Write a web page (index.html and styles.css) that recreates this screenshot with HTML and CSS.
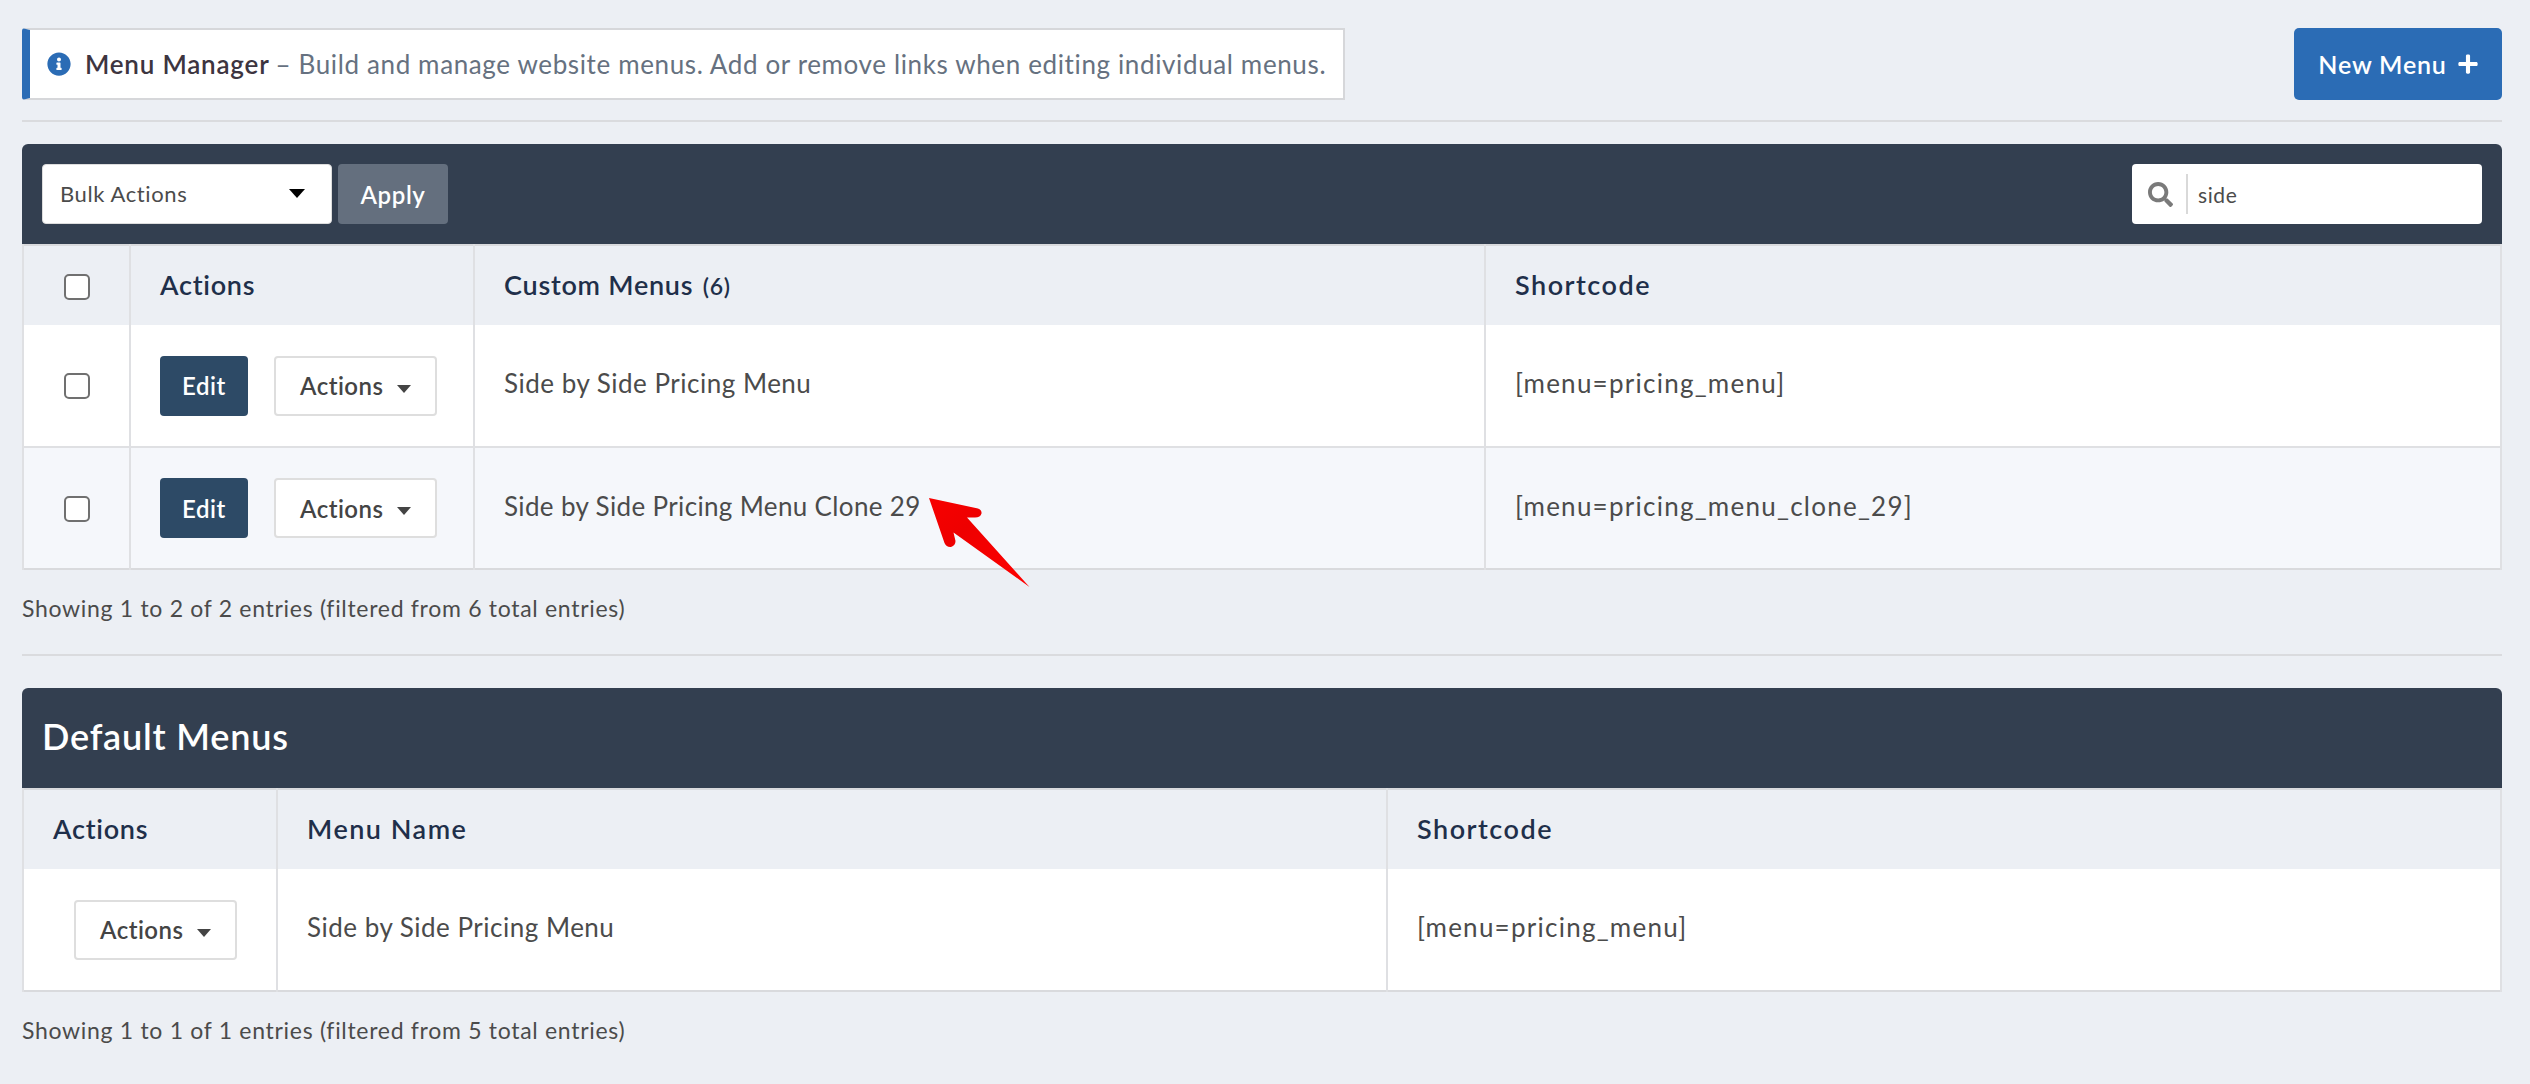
FILE: index.html
```html
<!DOCTYPE html>
<html lang="en">

<head>
    <meta charset="UTF-8">
    <title>Menu Manager</title>
    <link rel="stylesheet" href="styles.css">
</head>

<body>
    <div class="top-bar">
        <div class="notice">
            <svg class="info-icon" viewBox="0 0 512 512"><path d="M256 8C119.043 8 8 119.083 8 256c0 136.997 111.043 248 248 248s248-111.003 248-248C504 119.083 392.957 8 256 8zm0 110c23.196 0 42 18.804 42 42s-18.804 42-42 42-42-18.804-42-42 18.804-42 42-42zm56 254c0 6.627-5.373 12-12 12h-88c-6.627 0-12-5.373-12-12v-24c0-6.627 5.373-12 12-12h12v-64h-12c-6.627 0-12-5.373-12-12v-24c0-6.627 5.373-12 12-12h64c6.627 0 12 5.373 12 12v100h12c6.627 0 12 5.373 12 12v24z"/></svg>
            <strong>Menu Manager</strong>
            <span>– Build and manage website menus. Add or remove links when editing individual menus.</span>
        </div>
        <button class="btn-new">New Menu
            <svg class="plus-icon" viewBox="0 0 448 512"><path d="M416 208H272V64c0-17.67-14.33-32-32-32h-32c-17.67 0-32 14.33-32 32v144H32c-17.67 0-32 14.33-32 32v32c0 17.67 14.33 32 32 32h144v144c0 17.67 14.33 32 32 32h32c17.67 0 32-14.33 32-32V304h144c17.67 0 32-14.33 32-32v-32c0-17.67-14.33-32-32-32z"/></svg>
        </button>
    </div>
    <hr class="rule-top">

    <div class="panel-bar">
        <div class="bulk">
            <div class="bulk-select">Bulk Actions <i class="caret caret-black"></i></div>
            <button class="btn-apply">Apply</button>
        </div>
        <div class="search">
            <svg class="search-icon" viewBox="0 0 512 512"><path d="M505 442.7L405.3 343c-4.5-4.5-10.6-7-17-7H372c27.6-35.3 44-79.7 44-128C416 93.1 322.9 0 208 0S0 93.1 0 208s93.1 208 208 208c48.3 0 92.7-16.4 128-44v16.3c0 6.4 2.5 12.5 7 17l99.7 99.7c9.4 9.4 24.6 9.4 33.9 0l28.3-28.3c9.4-9.4 9.4-24.6.1-34zM208 336c-70.7 0-128-57.2-128-128 0-70.7 57.2-128 128-128 70.7 0 128 57.2 128 128 0 70.7-57.2 128-128 128z"/></svg>
            <span class="search-text">side</span>
        </div>
    </div>
    <table class="menu-table custom">
        <thead>
            <tr>
                <th class="check-cell"><span class="check"></span></th>
                <th>Actions</th>
                <th>Custom Menus <small>(6)</small></th>
                <th class="wide">Shortcode</th>
            </tr>
        </thead>
        <tbody>
            <tr>
                <td class="check-cell"><span class="check"></span></td>
                <td><button class="btn-edit">Edit</button><button class="btn-actions">Actions <i class="caret"></i></button></td>
                <td class="label">Side by Side Pricing Menu</td>
                <td class="label code">[menu=pricing_menu]</td>
            </tr>
            <tr class="alt">
                <td class="check-cell"><span class="check"></span></td>
                <td><button class="btn-edit">Edit</button><button class="btn-actions">Actions <i class="caret"></i></button></td>
                <td class="label clone">Side by Side Pricing Menu Clone 29</td>
                <td class="label code">[menu=pricing_menu_clone_29]</td>
            </tr>
        </tbody>
    </table>
    <p class="entries">Showing 1 to 2 of 2 entries (filtered from 6 total entries)</p>
    <hr class="rule-mid">

    <div class="panel-bar panel-title">Default Menus</div>
    <table class="menu-table defaults">
        <thead>
            <tr>
                <th>Actions</th>
                <th class="wide">Menu Name</th>
                <th class="wide">Shortcode</th>
            </tr>
        </thead>
        <tbody>
            <tr>
                <td class="center-cell"><button class="btn-actions">Actions <i class="caret"></i></button></td>
                <td class="label">Side by Side Pricing Menu</td>
                <td class="label code">[menu=pricing_menu]</td>
            </tr>
        </tbody>
    </table>
    <p class="entries">Showing 1 to 1 of 1 entries (filtered from 5 total entries)</p>

    <!-- annotation arrow drawn over the table -->
    <svg class="arrow" viewBox="0 0 110 98">
        <defs>
            <linearGradient id="arrowFill" x1="0" y1="0" x2="1" y2="1">
                <stop offset="0" stop-color="#f80000"/>
                <stop offset="0.35" stop-color="#ee0000"/>
                <stop offset="1" stop-color="#ff0000"/>
            </linearGradient>
        </defs>
        <path fill="url(#arrowFill)" d="M4 4 L53 14.5 Q57 16 56.500 19.500 Q55.500 23.500 50 23.500 L42 23.500 L104.500 93 L28.500 38.500 L30.500 47 Q30.500 51.500 26 53 Q21.500 53.500 19.500 49 Z"/>
    </svg>
</body>

</html>
```
FILE: styles.css
```css
body {
    font-family: "Lato", "Open Sans", sans-serif;
    font-size: 26px;
    color: #4b4b4b;
    background-color: #eceff4;
    margin: 0;
    padding: 28px 28px 0 22px;
    height: 1056px;
    overflow: hidden;
    position: relative;
}

.top-bar {
    display: flex;
    justify-content: space-between;
    align-items: stretch;
    height: 72px;
}

.notice {
    display: flex;
    align-items: center;
    gap: 6px;
    box-sizing: border-box;
    width: 1323px;
    padding-left: 17px;
    background-color: #fff;
    border: 2px solid #d6d7da;
    border-left: 8px solid #2b6cb5;
    border-radius: 3px 0 0 3px;
    letter-spacing: 0.63px;
    color: #667180;
}

.notice strong {
    font-weight: 600;
    color: #3d3540;
    margin-left: 8px;
    letter-spacing: 0.8px;
}

.info-icon {
    width: 24px;
    height: 24px;
    fill: #2b6cb5;
}

button {
    font-family: inherit;
    cursor: pointer;
}

.btn-new {
    width: 208px;
    display: flex;
    align-items: center;
    justify-content: center;
    gap: 11px;
    border: none;
    border-radius: 5px;
    background-color: #2b6cb5;
    color: #fff;
    font-size: 25px;
    font-weight: 600;
    letter-spacing: 0.8px;
}

.plus-icon {
    width: 20px;
    height: 22px;
    fill: #fff;
}

hr {
    border: none;
    height: 2px;
    background-color: #dadbde;
    margin: 0;
}

.rule-top {
    margin: 20px 0 22px;
}

.rule-mid {
    margin: 0 0 32px;
}

.panel-bar {
    display: flex;
    justify-content: space-between;
    align-items: center;
    box-sizing: border-box;
    height: 100px;
    padding: 0 20px;
    background-color: #333f50;
    border-radius: 6px 6px 0 0;
}

.panel-title {
    padding-bottom: 4px;
    color: #fff;
    font-size: 36px;
    font-weight: 600;
    letter-spacing: 0.8px;
}

.bulk {
    display: flex;
    gap: 6px;
}

.bulk-select {
    display: flex;
    justify-content: space-between;
    align-items: center;
    box-sizing: border-box;
    width: 290px;
    height: 60px;
    padding: 0 26px 2px 17px;
    background-color: #fff;
    border: 1px solid #ddd;
    border-radius: 4px;
    font-size: 22px;
    letter-spacing: 0.6px;
}

.btn-apply {
    width: 110px;
    height: 60px;
    border: none;
    border-radius: 4px;
    background-color: #646f7e;
    color: #fff;
    font-size: 24px;
    font-weight: 600;
    letter-spacing: 0.6px;
}

.search {
    display: flex;
    align-items: center;
    box-sizing: border-box;
    width: 350px;
    height: 60px;
    padding-left: 16px;
    background-color: #fff;
    border-radius: 4px;
}

.search-icon {
    width: 25px;
    height: 25px;
    fill: #7a7a7a;
}

.search-text {
    border-left: 2px solid #d9d9d9;
    margin-left: 13px;
    padding-left: 10px;
    height: 40px;
    line-height: 41px;
    font-size: 21px;
    letter-spacing: 0.6px;
}

.menu-table {
    width: 100%;
    table-layout: fixed;
    border-collapse: collapse;
    border: 2px solid #d9dadd;
}

.menu-table th,
.menu-table td {
    box-sizing: border-box;
    text-align: left;
    padding: 0 0 0 29px;
    border-left: 2px solid #dfe0e3;
    border-right: 2px solid #dfe0e3;
    letter-spacing: 0.5px;
}

.menu-table th {
    height: 80px;
    padding-bottom: 2px;
    font-size: 27px;
    font-weight: 600;
    color: #1f2f4a;
    letter-spacing: 0.75px;
}

.menu-table th.wide {
    letter-spacing: 1.5px;
}

.menu-table th small {
    font-size: 23px;
    margin-left: 2px;
}

.menu-table td {
    height: 122px;
    background-color: #fff;
}

.menu-table td.label {
    padding-bottom: 5px;
}

.menu-table td.code {
    letter-spacing: 1.25px;
}

.menu-table td.clone {
    letter-spacing: 0.35px;
}

.menu-table tbody tr + tr td {
    border-top: 2px solid #dfe0e3;
}

.menu-table .alt td {
    background-color: #f5f7fb;
}

.custom th:nth-child(1) { width: 107px; }
.custom th:nth-child(2) { width: 344px; }
.custom th:nth-child(3) { width: 1011px; }

.defaults th:nth-child(1) { width: 254px; }
.defaults th:nth-child(2) { width: 1110px; }

.menu-table .check-cell {
    padding: 0 0 5px;
    text-align: center;
}

.menu-table .center-cell {
    padding-left: 50px;
}

.check {
    display: inline-block;
    box-sizing: border-box;
    width: 26px;
    height: 26px;
    border: 2px solid #707070;
    border-radius: 5px;
    background-color: #fff;
    vertical-align: middle;
}

.btn-edit {
    width: 88px;
    height: 60px;
    margin-right: 26px;
    border: none;
    border-radius: 4px;
    background-color: #2d4a66;
    color: #fff;
    font-size: 24px;
    font-weight: 600;
    letter-spacing: 0.6px;
    vertical-align: middle;
}

.btn-actions {
    width: 163px;
    height: 60px;
    padding: 0;
    border: 2px solid #dedede;
    border-radius: 4px;
    background-color: #fff;
    color: #444;
    font-size: 24px;
    font-weight: 600;
    letter-spacing: 0.5px;
    vertical-align: middle;
}

.caret {
    display: inline-block;
    width: 0;
    height: 0;
    margin-left: 7px;
    vertical-align: middle;
    border-left: 7px solid transparent;
    border-right: 7px solid transparent;
    border-top: 8px solid #444;
}

.caret-black {
    border-left-width: 8px;
    border-right-width: 8px;
    border-top-width: 9px;
    border-top-color: #000;
}

.entries {
    margin: 23px 0 31px;
    height: 30px;
    line-height: 30px;
    font-size: 23px;
    letter-spacing: 0.7px;
}

.arrow {
    position: absolute;
    left: 925px;
    top: 494px;
    width: 110px;
    height: 98px;
}
```
